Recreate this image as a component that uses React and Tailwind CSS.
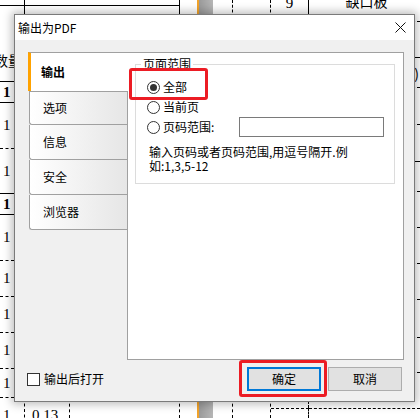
import React from 'react'

function Sheet() {
  return (
    <div className="flex h-full font-['Liberation_Serif','Noto_Sans_CJK_SC',serif] text-[15px] leading-none text-black">
      {/* 数量 column */}
      <div className="flex w-[25px] shrink-0 flex-col">
        <div className="h-[6px] shrink-0 border-b border-r border-black" />
        <div className="flex h-[76px] shrink-0 items-end border-b border-r border-black pb-[14px]">
          <span className="-ml-[6px] whitespace-nowrap font-['Noto_Sans_CJK_SC',sans-serif] text-[14px]">数量</span>
        </div>
        <div className="flex h-[21px] shrink-0 items-center border-b border-black pl-[3px] font-bold">1</div>
        <div className="flex h-[46px] shrink-0 items-center border-b border-dashed border-black pl-[3px]">1</div>
        <div className="flex h-[45px] shrink-0 items-center border-b border-black pl-[3px]">1</div>
        <div className="flex h-[21px] shrink-0 items-center border-b border-black pl-[3px] font-bold">1</div>
        <div className="flex h-[46px] shrink-0 items-center border-b border-dashed border-black pl-[3px]">1</div>
        <div className="flex h-[36px] shrink-0 items-center border-b border-dashed border-black pl-[3px]">1</div>
        <div className="flex h-[36px] shrink-0 items-center border-b border-dashed border-black pl-[3px]">1</div>
        <div className="flex h-[36px] shrink-0 items-center border-b border-dashed border-black pl-[3px]">1</div>
        <div className="flex h-[29px] shrink-0 items-center border-b border-dashed border-black pl-[3px]">1</div>
        <div className="flex flex-1 items-start border-r border-dashed border-black pl-[3px] pt-[10px]">1</div>
      </div>

      <div className="flex w-[45px] shrink-0 flex-col">
        <div className="h-[6px] shrink-0 border-b border-black" />
        <div className="flex-1" />
        <div className="flex h-[20px] shrink-0 items-start border-r border-dashed border-black pl-[7px] pt-[10px]">0.13</div>
      </div>

      <div className="flex w-[110px] shrink-0 flex-col">
        <div className="h-[6px] shrink-0 border-b border-r border-black" />
        <div className="flex-1 border-r border-black" />
        <div className="h-[20px] shrink-0 border-r border-dashed border-black" />
      </div>

      <div className="w-[17px] shrink-0" />
      <div className="w-[16px] shrink-0 border-l-2 border-[#f2a32a] bg-linear-to-r from-[#9a9a9a] to-[#b6b6b6]" />

      <div className="flex w-[20px] shrink-0 flex-col">
        <div className="h-[22px] shrink-0 border-r border-dashed border-black" />
        <div className="flex-1" />
        <div className="h-[20px] shrink-0 border-r border-dashed border-black" />
      </div>

      <div className="flex w-[38px] shrink-0 flex-col">
        <div className="h-[22px] shrink-0 border-r border-dashed border-black" />
        <div className="flex-1" />
        <div className="h-[20px] shrink-0 border-r border-dashed border-black" />
      </div>

      <div className="flex w-[38px] shrink-0 flex-col">
        <div className="flex h-[22px] shrink-0 items-start justify-center border-r border-black">
          <span className="-mt-[4px]">9</span>
        </div>
        <div className="flex-1" />
        <div className="h-[11px] shrink-0 border-r border-dashed border-black" />
        <div className="h-[10px] shrink-0 border-r border-t border-dashed border-black" />
      </div>

      {/* 名称 column */}
      <div className="flex flex-1 flex-col font-['Noto_Sans_CJK_SC',sans-serif] text-[14px]">
        <div className="flex h-[22px] shrink-0 items-start justify-center border-b border-dashed border-black">
          <span className="-mt-[6px] pl-[4px]">缺口板</span>
        </div>
        <div className="h-[36px] shrink-0 border-b border-black" />
        <div className="flex h-[30px] shrink-0 items-center justify-end border-b border-dashed border-black pr-[1px]">
          <span>)</span>
        </div>
        <div className="h-[37px] shrink-0 border-b border-dashed border-black" />
        <div className="h-[37px] shrink-0 border-b border-black" />
        <div className="h-[30px] shrink-0 border-b border-dashed border-black" />
        <div className="h-[36px] shrink-0 border-b border-dashed border-black" />
        <div className="h-[36px] shrink-0 border-b border-dashed border-black" />
        <div className="h-[36px] shrink-0 border-b border-dashed border-black" />
        <div className="h-[38px] shrink-0 border-b border-dashed border-black" />
        <div className="h-[35px] shrink-0 border-b border-dashed border-black" />
        <div className="h-[36px] shrink-0 border-b border-dashed border-black" />
        <div className="flex-1" />
      </div>
    </div>
  )
}

function Tab({ first, children }) {
  return (
    <div
      className={`ml-px flex shrink-0 items-center rounded-bl-[3px] border-b border-l border-[#a0a0a0] bg-linear-to-r from-white to-[#e6e6e6] pl-[13px] ${first ? 'h-[34px] border-t' : 'h-[35px]'}`}
    >
      {children}
    </div>
  )
}

function Radio({ checked }) {
  return (
    <span className="flex h-[13px] w-[13px] shrink-0 items-center justify-center rounded-full border border-[#333333] bg-white">
      {checked && <span className="h-[7px] w-[7px] rounded-full bg-[#333333]" />}
    </span>
  )
}

function ExportDialog() {
  return (
    <div className="absolute left-[14px] top-[14px] flex h-[388px] w-[401px] flex-col border border-[#7a7a7a] bg-[#f0f0f0] font-['Noto_Sans_CJK_SC','Noto_Sans',sans-serif] text-[12px] leading-none text-black shadow-[0_0_9px_2px_rgba(0,0,0,0.28)]">
      <div className="flex h-[25px] shrink-0 items-center justify-between bg-white pl-[3px] pr-[8px]">
        <span>输出为PDF</span>
        <svg width="11" height="11" viewBox="0 0 11 11" fill="none">
          <path d="M0.5 0.5L10.5 10.5M10.5 0.5L0.5 10.5" stroke="#111" strokeWidth="1" />
        </svg>
      </div>

      <div className="flex flex-1 flex-col pl-[13px] pr-[10px] pt-[12px]">
        <div className="flex h-[308px] shrink-0">
          <div className="flex w-[99px] shrink-0 flex-col">
            <div className="relative z-10 -mr-px flex h-[39px] shrink-0 items-center border-l-[3px] border-t border-l-[#ffa200] border-t-[#a0a0a0] bg-white pl-[10px] font-bold">
              输出
            </div>
            <Tab first>选项</Tab>
            <Tab>信息</Tab>
            <Tab>安全</Tab>
            <Tab>浏览器</Tab>
          </div>

          <div className="flex-1 border border-[#a0a0a0] bg-white">
            <fieldset className="ml-[7px] mr-[8px] mt-[3px] border border-[#dcdcdc] px-0 pb-[10px]">
              <legend className="ml-[5px] px-[2px] leading-[16px]">页面范围</legend>
              <div className="pl-[11px] pt-[5px]">
                <div className="relative flex h-[20px] items-center">
                  <div className="absolute -left-[18px] -top-[9px] h-[32px] w-[79px] rounded-[3px] border-[3px] border-[#ec1c24]" />
                  <Radio checked />
                  <span className="ml-[3px]">全部</span>
                </div>
                <div className="flex h-[20px] items-center">
                  <Radio />
                  <span className="ml-[3px]">当前页</span>
                </div>
                <div className="flex h-[20px] items-center">
                  <Radio />
                  <span className="ml-[3px]">页码范围:</span>
                  <input
                    type="text"
                    className="ml-auto mr-[10px] h-[20px] w-[145px] border border-[#7a7a7a] bg-white outline-none"
                  />
                </div>
                <p className="ml-[2px] mt-[8px] leading-[14px]">
                  输入页码或者页码范围,用逗号隔开.例
                  <br />
                  如:1,3,5-12
                </p>
              </div>
            </fieldset>
          </div>
        </div>

        <div className="mt-[7px] flex h-[24px] items-center">
          <span className="-ml-px h-[13px] w-[13px] border border-[#333333] bg-white" />
          <span className="ml-[4px]">输出后打开</span>
          <div className="relative ml-auto">
            <div className="absolute -left-[8px] -top-[7px] h-[37px] w-[88px] rounded-[3px] border-[3px] border-[#ec1c24]" />
            <button className="flex h-[24px] w-[74px] items-center justify-center border-2 border-[#0078d7] bg-[#e1e1e1]">
              确定
            </button>
          </div>
          <button className="ml-[7px] mr-[2px] flex h-[24px] w-[74px] items-center justify-center border border-[#adadad] bg-[#e1e1e1]">
            取消
          </button>
        </div>
      </div>
    </div>
  )
}

export default function App() {
  return (
    <div className="relative h-[418px] w-[420px] overflow-hidden bg-white">
      <Sheet />
      <ExportDialog />
    </div>
  )
}
